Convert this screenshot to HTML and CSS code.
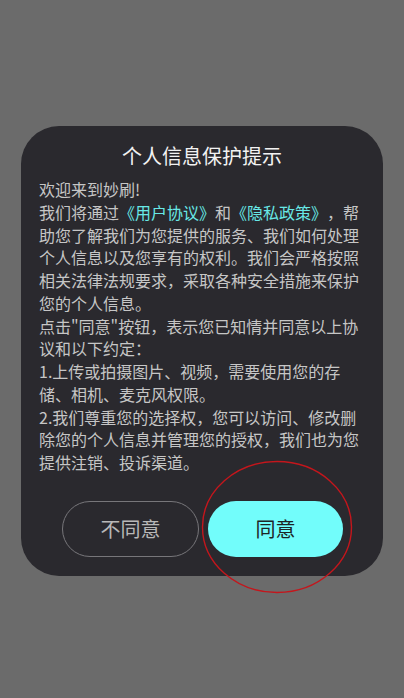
FILE: index.html
```html
<!DOCTYPE html>
<html lang="zh-CN">
<head>
<meta charset="utf-8">
<title>个人信息保护提示</title>
<link rel="stylesheet" href="styles.css">
</head>
<body>
<div class="screen">
  <div class="dialog">
    <h1 class="title">个人信息保护提示</h1>
    <div class="content">
      <p>欢迎来到妙刷!</p>
      <p>我们将通过<span class="link">《用户协议》</span>和<span class="link">《隐私政策》</span>，帮助您了解我们为您提供的服务、我们如何处理个人信息以及您享有的权利。我们会严格按照相关法律法规要求，采取各种安全措施来保护您的个人信息。</p>
      <p>点击"同意"按钮，表示您已知情并同意以上协议和以下约定：</p>
      <p>1.上传或拍摄图片、视频，需要使用您的存储、相机、麦克风权限。</p>
      <p>2.我们尊重您的选择权，您可以访问、修改删除您的个人信息并管理您的授权，我们也为您提供注销、投诉渠道。</p>
    </div>
    <div class="actions">
      <button class="btn btn-decline">不同意</button>
      <button class="btn btn-agree">同意</button>
    </div>
  </div>
  <svg class="mark" width="156" height="138" viewBox="0 0 156 138"><ellipse cx="78" cy="69" rx="74.5" ry="65.5" fill="none" stroke="#c4161c" stroke-width="1.4"/></svg>
</div>
</body>
</html>
```
FILE: styles.css
```css
html, body {
  margin: 0;
  padding: 0;
  background: #6b6b6b;
}
body {
  font-family: "Noto Sans CJK SC", "Noto Sans", sans-serif;
}
.screen {
  position: relative;
  width: 404px;
  height: 698px;
  padding-top: 126px;
  box-sizing: border-box;
}
.dialog {
  margin-left: 21px;
  width: 362px;
  height: 450px;
  box-sizing: border-box;
  background: #2a292e;
  border-radius: 38px;
  padding: 15px 0 0 0;
  display: flex;
  flex-direction: column;
}
.title {
  margin: 0 0 7px 0;
  font-size: 20px;
  font-weight: normal;
  line-height: 30px;
  color: #f2f2f2;
  text-align: center;
}
.content {
  margin-left: 18px;
  width: 324px;
  font-size: 16px;
  line-height: 22.75px;
  color: #c6c6c6;
  text-spacing-trim: space-all;
}
.content p {
  margin: 0;
}
.link {
  color: #68e8e6;
}
.actions {
  display: flex;
  gap: 9px;
  margin-top: 27px;
  padding: 0 40px 0 41px;
}
.btn {
  flex: 1;
  height: 56px;
  border-radius: 28px;
  font-family: "Noto Sans CJK SC", "Noto Sans", sans-serif;
  font-size: 20px;
  padding: 0;
}
.btn-decline {
  background: transparent;
  border: 1px solid #77767a;
  color: #b8b8b8;
}
.btn-agree {
  background: #72fdfb;
  border: none;
  color: #1d2424;
}
.mark {
  position: absolute;
  left: 199px;
  top: 458px;
}
```
